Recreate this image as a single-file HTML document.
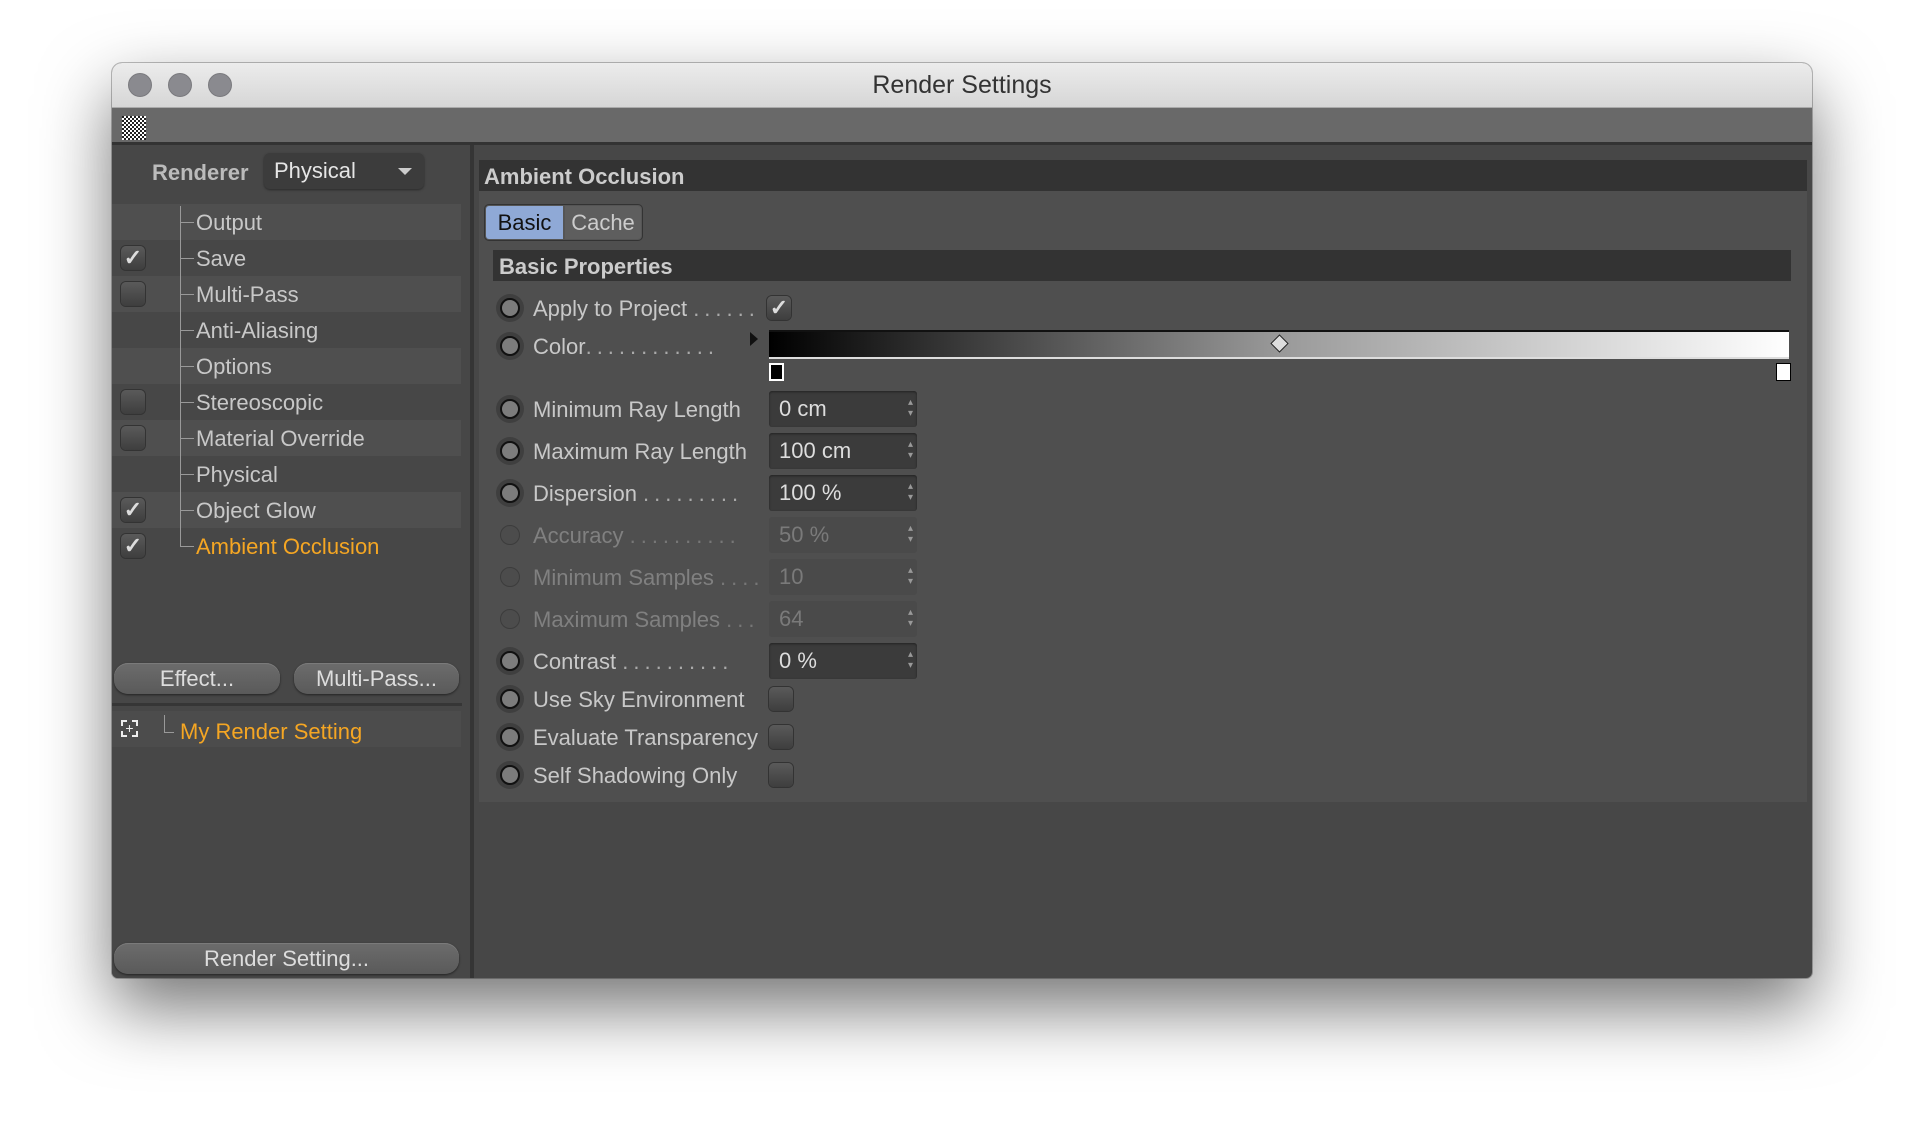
<!DOCTYPE html>
<html><head><meta charset="utf-8">
<style>
*{margin:0;padding:0;box-sizing:border-box}
body{width:1924px;height:1138px;background:#fff;font-family:"Liberation Sans",sans-serif;position:relative;overflow:hidden}
.win{position:absolute;left:112px;top:63px;width:1700px;height:915px;border-radius:10px 10px 6px 6px;background:#474747;box-shadow:0 30px 70px rgba(0,0,0,.55),0 0 0 1px rgba(0,0,0,.25);overflow:hidden}
.title{position:absolute;left:0;top:0;width:1700px;height:45px;background:linear-gradient(#ececec,#d6d6d6);border-bottom:1px solid #aaa;text-align:center;font-size:25px;line-height:45px;color:#333}
.tl{position:absolute;top:10px;width:24px;height:24px;border-radius:50%;background:#8a8a8f;border:1px solid #7a7a7e}
.tool{position:absolute;left:0;top:45px;width:1700px;height:37px;background:#696969;border-bottom:3px solid #333}
.a{position:absolute}
.txt{color:#c8c8c8;font-size:22px;white-space:nowrap}
.stripe{position:absolute;left:0;width:349px;height:36px}
.cb{position:absolute;width:24px;height:24px;border-radius:5px;background:linear-gradient(#5a5a5a,#3e3e3e);box-shadow:0 0 0 1px #333}
.ck{color:#ddd;font-size:22px;line-height:24px;text-align:center;font-weight:bold}
.radio{position:absolute;width:28px;height:28px;border-radius:50%;background:#3f3f3f}
.radio::after{content:"";position:absolute;left:4px;top:4px;width:20px;height:20px;border-radius:50%;background:#7c7c7c;border:2px solid #111;box-sizing:border-box}
.radio.dis{background:none}
.radio.dis::after{background:#4c4c4c;border:1px solid #3c3c3c}
.field{position:absolute;left:657px;width:148px;height:36px;background:#3b3b3b;border-radius:3px;box-shadow:inset 0 1px 2px #222;color:#ddd;font-size:22px;line-height:36px;padding-left:10px}
.field.dis{background:#4a4a4a;color:#7a7a7a;box-shadow:none}
.field::after{content:"▴\A▾";white-space:pre;position:absolute;right:4px;top:6px;font-size:10px;line-height:11px;color:#999}
.btn{position:absolute;height:31px;border-radius:14px;background:linear-gradient(#6c6c6c,#5a5a5a);box-shadow:0 1px 2px #222,inset 0 1px 0 #7a7a7a;color:#ddd;font-size:22px;line-height:31px;text-align:center}
.dots{color:#aaa;letter-spacing:5px}
</style></head><body>
<div class="win">
 <div class="title">Render Settings
  <div class="tl" style="left:16px"></div><div class="tl" style="left:56px"></div><div class="tl" style="left:96px"></div>
 </div>
 <div class="tool"><div class="a" style="left:10px;top:8px;width:24px;height:24px;background:repeating-conic-gradient(#fff 0 25%,#222 0 50%) 0 0/4px 4px"></div></div>

 <!-- left panel -->
 <div class="a" style="left:0;top:82px;width:358px;height:833px;background:#474747">
  <div class="a txt" style="left:40px;top:15px;font-weight:bold;color:#bbb">Renderer</div>
  <div class="a" style="left:152px;top:8px;width:160px;height:36px;border-radius:6px;background:#3c3c3c;box-shadow:0 1px 2px #2a2a2a"><span class="a txt" style="left:10px;top:5px;color:#e6e6e6">Physical</span><span class="a" style="left:134px;top:15px;border:7px solid transparent;border-top:7px solid #ccc"></span></div>
 </div>
 <div class="a" style="left:358px;top:82px;width:4px;height:833px;background:#353535"></div>

 <!-- tree -->
 <div class="a" style="left:0;top:141px;width:349px;height:360px">
  <div class="stripe" style="top:0;background:#4f4f4f"></div>
  <div class="stripe" style="top:72px;background:#4f4f4f"></div>
  <div class="stripe" style="top:144px;background:#4f4f4f"></div>
  <div class="stripe" style="top:216px;background:#4f4f4f"></div>
  <div class="stripe" style="top:288px;background:#4f4f4f"></div>
  <div class="a" style="left:68px;top:2px;width:1px;height:340px;background:#999"></div>
 </div>
 <div class="a" style="left:0;top:141px">
  <div class="a txt" style="left:84px;top:6px">Output</div>
  <div class="a txt" style="left:84px;top:42px">Save</div>
  <div class="a txt" style="left:84px;top:78px">Multi-Pass</div>
  <div class="a txt" style="left:84px;top:114px">Anti-Aliasing</div>
  <div class="a txt" style="left:84px;top:150px">Options</div>
  <div class="a txt" style="left:84px;top:186px">Stereoscopic</div>
  <div class="a txt" style="left:84px;top:222px">Material Override</div>
  <div class="a txt" style="left:84px;top:258px">Physical</div>
  <div class="a txt" style="left:84px;top:294px">Object Glow</div>
  <div class="a txt" style="left:84px;top:330px;color:#f5a623">Ambient Occlusion</div>
  <div class="a" style="left:68px;top:18px;width:14px;height:1px;background:#999"></div>
  <div class="a" style="left:68px;top:54px;width:14px;height:1px;background:#999"></div>
  <div class="a" style="left:68px;top:90px;width:14px;height:1px;background:#999"></div>
  <div class="a" style="left:68px;top:126px;width:14px;height:1px;background:#999"></div>
  <div class="a" style="left:68px;top:162px;width:14px;height:1px;background:#999"></div>
  <div class="a" style="left:68px;top:198px;width:14px;height:1px;background:#999"></div>
  <div class="a" style="left:68px;top:234px;width:14px;height:1px;background:#999"></div>
  <div class="a" style="left:68px;top:270px;width:14px;height:1px;background:#999"></div>
  <div class="a" style="left:68px;top:306px;width:14px;height:1px;background:#999"></div>
  <div class="a" style="left:68px;top:342px;width:14px;height:1px;background:#999"></div>
  <div class="cb ck" style="left:9px;top:42px">✓</div>
  <div class="cb" style="left:9px;top:78px"></div>
  <div class="cb" style="left:9px;top:186px"></div>
  <div class="cb" style="left:9px;top:222px"></div>
  <div class="cb ck" style="left:9px;top:294px">✓</div>
  <div class="cb ck" style="left:9px;top:330px">✓</div>
 </div>
 <div class="btn" style="left:2px;top:600px;width:166px">Effect...</div>
 <div class="btn" style="left:182px;top:600px;width:165px">Multi-Pass...</div>
 <div class="a" style="left:0;top:640px;width:350px;height:3px;background:#363636"></div>
 <div class="a" style="left:0;top:648px;width:349px;height:36px;background:#4c4c4c"></div>
 <div class="a" style="left:9px;top:657px;width:17px;height:17px;border:2px dashed #eee;color:#eee;font-size:14px;line-height:13px;text-align:center">+</div>
 <div class="a" style="left:52px;top:652px;width:1px;height:17px;background:#999"></div>
 <div class="a" style="left:52px;top:669px;width:10px;height:1px;background:#999"></div>
 <div class="a txt" style="left:68px;top:656px;color:#f5a623">My Render Setting</div>
 <div class="btn" style="left:2px;top:880px;width:345px">Render Setting...</div>

 <!-- right panel -->
 <div class="a" style="left:367px;top:97px;width:1328px;height:642px;background:#4f4f4f"></div>
 <div class="a" style="left:367px;top:97px;width:1328px;height:31px;background:#333"><span class="a txt" style="left:5px;top:4px;font-weight:bold;color:#ccc">Ambient Occlusion</span></div>
 <div class="a" style="left:373px;top:142px;width:157px;height:35px;border-radius:4px;background:#555;box-shadow:0 0 0 1px #333"></div>
 <div class="a" style="left:374px;top:143px;width:77px;height:33px;background:#8fa9d6;border-radius:3px 0 0 3px;color:#111;font-size:22px;line-height:33px;text-align:center">Basic</div>
 <div class="a" style="left:453px;top:143px;width:76px;height:33px;background:#5e5e5e;color:#ccc;font-size:22px;line-height:33px;text-align:center;border-radius:0 3px 3px 0">Cache</div>
 <div class="a" style="left:381px;top:187px;width:1298px;height:31px;background:#333"><span class="a txt" style="left:6px;top:4px;font-weight:bold;color:#ccc">Basic Properties</span></div>

 <div class="radio" style="left:384px;top:231px"></div><div class="a txt" style="left:421px;top:233px">Apply to Project <span class="dots">......</span></div>
 <div class="cb ck" style="left:655px;top:233px">✓</div>
 <div class="radio" style="left:384px;top:269px"></div><div class="a txt" style="left:421px;top:271px">Color<span class="dots">............</span></div>
 <div class="a" style="left:638px;top:269px;border:7px solid transparent;border-left:8px solid #111"></div>
 <div class="a" style="left:657px;top:267px;width:1020px;height:29px;background:linear-gradient(90deg,#000,#999 50%,#fff);border-top:2px solid #111;border-bottom:2px solid #ddd"></div>
 <div class="a" style="left:1161px;top:274px;width:13px;height:13px;transform:rotate(45deg);background:#ddd;border:1px solid #222"></div>
 <div class="a" style="left:657px;top:300px;width:15px;height:18px;background:#000;border:2px solid #fff"></div>
 <div class="a" style="left:1664px;top:300px;width:15px;height:18px;background:#fff;border:1px solid #000"></div>

 <div class="radio" style="left:384px;top:332px"></div><div class="a txt" style="left:421px;top:334px">Minimum Ray Length</div>
 <div class="field" style="top:328px">0 cm</div>
 <div class="radio" style="left:384px;top:374px"></div><div class="a txt" style="left:421px;top:376px">Maximum Ray Length</div>
 <div class="field" style="top:370px">100 cm</div>
 <div class="radio" style="left:384px;top:416px"></div><div class="a txt" style="left:421px;top:418px">Dispersion <span class="dots">.........</span></div>
 <div class="field" style="top:412px">100 %</div>
 <div class="radio dis" style="left:384px;top:458px"></div><div class="a txt" style="left:421px;top:460px;color:#808080">Accuracy <span class="dots" style="color:#777">..........</span></div>
 <div class="field dis" style="top:454px">50 %</div>
 <div class="radio dis" style="left:384px;top:500px"></div><div class="a txt" style="left:421px;top:502px;color:#808080">Minimum Samples <span class="dots" style="color:#777">....</span></div>
 <div class="field dis" style="top:496px">10</div>
 <div class="radio dis" style="left:384px;top:542px"></div><div class="a txt" style="left:421px;top:544px;color:#808080">Maximum Samples <span class="dots" style="color:#777">...</span></div>
 <div class="field dis" style="top:538px">64</div>
 <div class="radio" style="left:384px;top:584px"></div><div class="a txt" style="left:421px;top:586px">Contrast <span class="dots">..........</span></div>
 <div class="field" style="top:580px">0 %</div>
 <div class="radio" style="left:384px;top:622px"></div><div class="a txt" style="left:421px;top:624px">Use Sky Environment</div>
 <div class="cb" style="left:657px;top:624px"></div>
 <div class="radio" style="left:384px;top:660px"></div><div class="a txt" style="left:421px;top:662px">Evaluate Transparency</div>
 <div class="cb" style="left:657px;top:662px"></div>
 <div class="radio" style="left:384px;top:698px"></div><div class="a txt" style="left:421px;top:700px">Self Shadowing Only</div>
 <div class="cb" style="left:657px;top:700px"></div>
</div>
</body></html>
